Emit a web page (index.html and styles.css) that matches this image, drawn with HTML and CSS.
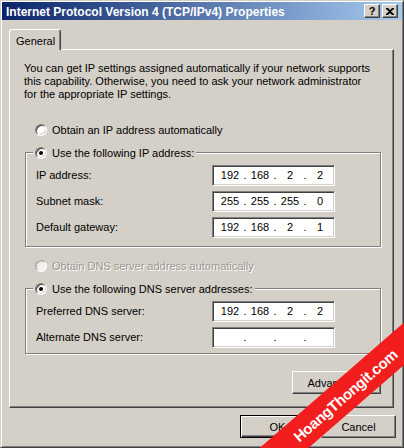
FILE: index.html
```html
<!DOCTYPE html>
<html>
<head>
<meta charset="utf-8">
<link rel="stylesheet" href="styles.css">
</head>
<body>
<div class="window">
  <div class="titlebar">
    <span class="title">Internet Protocol Version 4 (TCP/IPv4) Properties</span>
    <div class="tbtns">
      <span class="tbtn help">?</span>
      <span class="tbtn close"><svg width="8" height="7" viewBox="0 0 8 7"><path d="M0 0h2l2 2 2-2h2v1L5 3.5 8 6v1H6L4 5 2 7H0V6l3-2.5L0 1z" fill="#000"/></svg></span>
    </div>
  </div>
  <div class="tabs"><div class="tab">General</div></div>
  <div class="panel">
    <p class="desc">You can get IP settings assigned automatically if your network supports<br>this capability. Otherwise, you need to ask your network administrator<br>for the appropriate IP settings.</p>
    <div class="radio-row first"><span class="radio"></span><span>Obtain an IP address automatically</span></div>
    <div class="group g1">
      <div class="legend"><span class="radio checked"></span><span>Use the following IP address:</span></div>
      <div class="rows">
        <div class="row"><span class="lbl">IP address:</span><div class="ipfield"><span class="oct">192</span><span class="dot">.</span><span class="oct">168</span><span class="dot">.</span><span class="oct">2</span><span class="dot">.</span><span class="oct">2</span></div></div>
        <div class="row"><span class="lbl">Subnet mask:</span><div class="ipfield"><span class="oct">255</span><span class="dot">.</span><span class="oct">255</span><span class="dot">.</span><span class="oct">255</span><span class="dot">.</span><span class="oct">0</span></div></div>
        <div class="row"><span class="lbl">Default gateway:</span><div class="ipfield"><span class="oct">192</span><span class="dot">.</span><span class="oct">168</span><span class="dot">.</span><span class="oct">2</span><span class="dot">.</span><span class="oct">1</span></div></div>
      </div>
    </div>
    <div class="radio-row disabled"><span class="radio dis"></span><span>Obtain DNS server address automatically</span></div>
    <div class="group g2">
      <div class="legend"><span class="radio checked"></span><span>Use the following DNS server addresses:</span></div>
      <div class="rows">
        <div class="row"><span class="lbl">Preferred DNS server:</span><div class="ipfield"><span class="oct">192</span><span class="dot">.</span><span class="oct">168</span><span class="dot">.</span><span class="oct">2</span><span class="dot">.</span><span class="oct">2</span></div></div>
        <div class="row"><span class="lbl">Alternate DNS server:</span><div class="ipfield"><span class="oct"></span><span class="dot">.</span><span class="oct"></span><span class="dot">.</span><span class="oct"></span><span class="dot">.</span><span class="oct"></span></div></div>
      </div>
    </div>
    <div class="adv-row"><button class="btn adv">Advanced...</button></div>
  </div>
  <div class="actions">
    <button class="btn default">OK</button>
    <button class="btn">Cancel</button>
  </div>
</div>
<div class="wm-clip"><div class="watermark">HoangThongit.com</div></div>
</body>
</html>
```
FILE: styles.css
```css
html, body {
  margin: 0;
  padding: 0;
  width: 404px;
  height: 448px;
  overflow: hidden;
}
body {
  position: relative;
  background: #d4d0c8;
  font: 11px "Liberation Sans", Arial, sans-serif;
  color: #000;
}
.window {
  box-sizing: border-box;
  width: 404px;
  height: 448px;
  border: 1px solid;
  border-color: #d4d0c8 #404040 #404040 #d4d0c8;
  box-shadow: inset 1px 1px #fff, inset -1px -1px #808080;
  padding: 1px;
  display: flex;
  flex-direction: column;
}
.titlebar {
  height: 18px;
  background: linear-gradient(to right, #0a246a, #a6caf0);
  display: flex;
  align-items: center;
  justify-content: space-between;
  padding: 0 4px 0 4px;
}
.title {
  color: #fff;
  font-weight: bold;
  font-size: 12px;
  padding-top: 1px;
}
.tbtns {
  display: flex;
  gap: 2px;
}
.tbtn {
  box-sizing: border-box;
  width: 16px;
  height: 14px;
  background: #d4d0c8;
  border: 1px solid;
  border-color: #fff #404040 #404040 #fff;
  box-shadow: inset -1px -1px #808080;
  display: flex;
  align-items: center;
  justify-content: center;
  font-weight: bold;
  font-size: 11px;
  line-height: 1;
}
.tabs {
  margin: 9px 0 0 7px;
  display: flex;
}
.tab {
  position: relative;
  z-index: 1;
  box-sizing: border-box;
  width: 52px;
  height: 21px;
  margin-bottom: -1px;
  background: #d4d0c8;
  border: 1px solid;
  border-bottom: none;
  border-color: #fff #404040 transparent #fff;
  border-radius: 3px 3px 0 0;
  box-shadow: inset -1px 0 #808080;
  padding: 5px 0 0 6px;
}
.panel {
  box-sizing: border-box;
  width: 385px;
  height: 359px;
  margin-left: 7px;
  border: 1px solid;
  border-color: #fff #404040 #404040 #fff;
  box-shadow: inset -1px -1px #808080;
  padding: 12px 0 0 0;
  display: flex;
  flex-direction: column;
}
.desc {
  margin: 0 0 0 14px;
  line-height: 13px;
}
.radio-row {
  display: flex;
  align-items: center;
  gap: 5px;
  height: 13px;
  margin-left: 25px;
}
.radio-row.first {
  margin-top: 22px;
}
.radio-row.disabled {
  margin-top: 12px;
  color: #9a9892;
  text-shadow: 1px 1px #fff;
}
.radio {
  box-sizing: border-box;
  width: 12px;
  height: 12px;
  flex: none;
  border-radius: 50%;
  border: 1px solid;
  border-color: #808080 #fff #fff #808080;
  background: #fff;
  box-shadow: inset 1px 1px #404040, inset -1px -1px #d4d0c8;
  display: inline-flex;
  align-items: center;
  justify-content: center;
}
.radio.checked::after {
  content: "";
  width: 4px;
  height: 4px;
  border-radius: 50%;
  background: #000;
}
.radio.dis {
  background: #f2f1ee;
  border-color: #a8a6a0 #fff #fff #a8a6a0;
  box-shadow: inset 1px 1px #c8c6c0;
}
.group {
  margin: 16px 12px 0 15px;
  border: 1px solid #808080;
  box-shadow: inset 1px 1px #fff, 1px 1px #fff;
}
.g1 { padding-bottom: 6px; }
.g2 { padding-bottom: 3px; }
.legend {
  display: flex;
  align-items: center;
  gap: 5px;
  height: 13px;
  margin: -7px 0 0 7px;
  padding: 0 2px;
  background: #d4d0c8;
  width: max-content;
}
.rows {
  margin-top: 3px;
  padding-left: 10px;
}
.row {
  display: flex;
  align-items: center;
  height: 26px;
}
.lbl {
  width: 176px;
}
.ipfield {
  box-sizing: border-box;
  width: 123px;
  height: 21px;
  background: #fff;
  border: 1px solid;
  border-color: #808080 #fff #fff #808080;
  box-shadow: inset 1px 1px #404040, inset -1px -1px #d4d0c8;
  display: flex;
  align-items: center;
  padding-left: 5px;
}
.oct {
  width: 24px;
  text-align: center;
}
.dot {
  width: 6px;
  text-align: center;
}
.adv-row {
  display: flex;
  justify-content: flex-end;
  margin: 17px 12px 0 0;
}
.btn {
  box-sizing: border-box;
  width: 75px;
  height: 23px;
  margin: 0;
  padding: 0;
  background: #d4d0c8;
  border: 1px solid;
  border-color: #fff #404040 #404040 #fff;
  box-shadow: inset -1px -1px #808080;
  font: 11px "Liberation Sans", Arial, sans-serif;
  color: #000;
}
.btn.adv {
  width: 89px;
}
.btn.default {
  border: 1px solid #000;
  box-shadow: inset 1px 1px #fff, inset -1px -1px #404040, inset -2px -2px #808080;
}
.actions {
  display: flex;
  justify-content: flex-end;
  gap: 6px;
  margin: 7px 6px 0 0;
}
.wm-clip {
  position: absolute;
  left: 0;
  top: 0;
  width: 404px;
  height: 448px;
  overflow: hidden;
  pointer-events: none;
}
.watermark {
  position: absolute;
  left: 220px;
  top: 379px;
  width: 250px;
  height: 32px;
  background: #f21d1d;
  color: #fff;
  font: bold 15px "Liberation Sans", Arial, sans-serif;
  letter-spacing: -0.3px;
  display: flex;
  align-items: center;
  justify-content: center;
  transform: rotate(-41deg);
}
```
